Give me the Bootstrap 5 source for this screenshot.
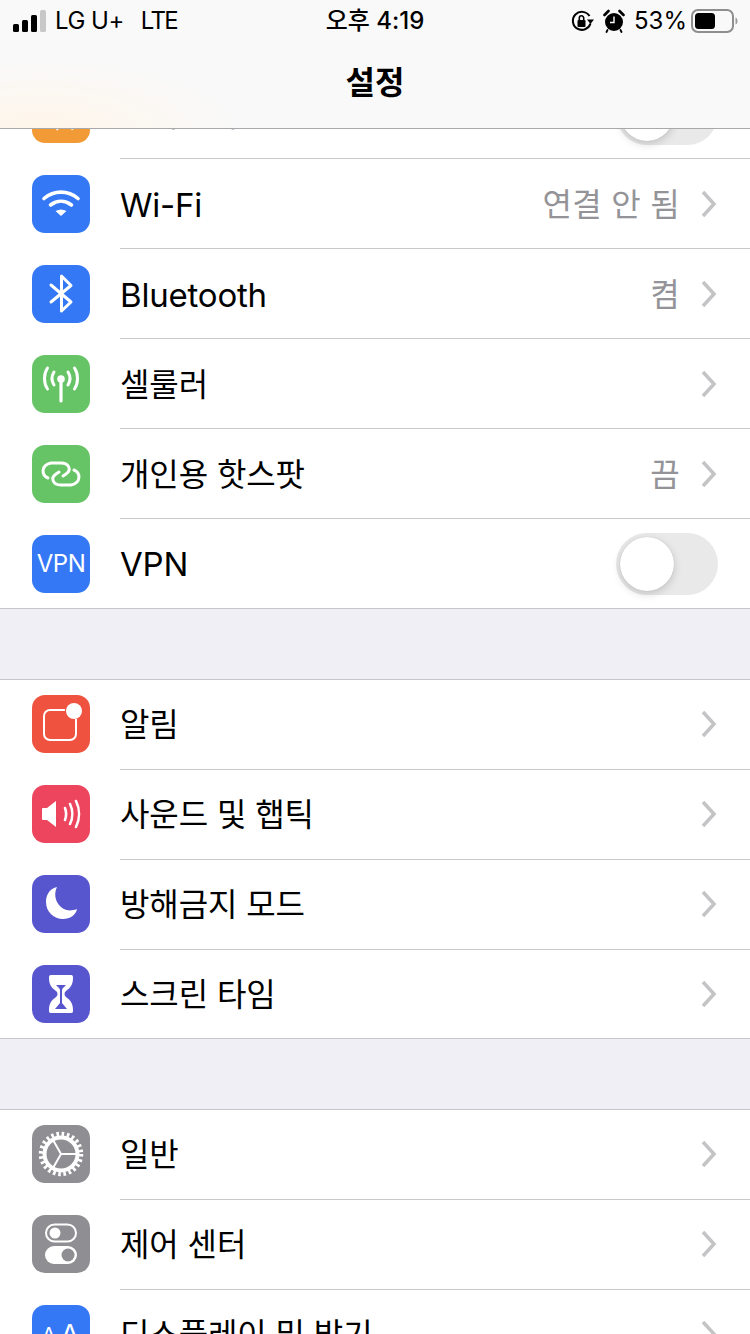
<!DOCTYPE html>
<html lang="ko">
<head>
  <meta charset="UTF-8" />
  <meta name="viewport" content="width=device-width, initial-scale=1.0"/>
  <title>설정</title>
  <link href="https://cdn.jsdelivr.net/npm/bootstrap@5.3.0/dist/css/bootstrap.min.css" rel="stylesheet"/>
  <style>
    html, body { height: 100%; }
    body {
      background: #f0eff5;
      font-family: Inter, "Noto Sans CJK KR", sans-serif;
      color: #000;
      overflow: hidden;
    }
    .phone { width: 750px; height: 1334px; overflow: hidden; position: relative; }

    .top-bar {
      position: absolute; top: 0; left: 0; right: 0; height: 129px; z-index: 5;
      background: radial-gradient(ellipse 200px 70px at 40px 130px, #fff6ea 0%, rgba(255,247,236,0) 100%), #f9f9f9;
      border-bottom: 1px solid #a9a9ab;
    }
    .status-line { height: 42px; padding: 0 12px 0 13px; font-size: 24px; line-height: 42px; position: relative; }
    .signal { width: 34px; height: 22px; margin-right: 8px; }
    .carrier { letter-spacing: -.5px; }
    .carrier-net { margin-left: 17px; letter-spacing: -1.6px; }
    .clock { position: absolute; left: 0; right: 0; top: 0; text-align: center; font-weight: 500; font-size: 24px; }
    .pct { margin: 0 4px 0 0; }
    .bar-title { font-size: 32px; font-weight: 600; line-height: 1; text-align: center; margin-top: 25px; }
    .stat-ico { margin-right: 9px; }

    .list-wrap { padding-top: 69px; }
    .set-group { background: #fff; border-bottom: 1px solid #c6c6c8; margin-bottom: 70px; }
    .set-group.has-top { border-top: 1px solid #c6c6c8; }
    .set-row { height: 90px; padding-left: 32px; position: relative; }
    .set-row:last-child { height: 89px; }
    .has-top .set-row { padding-bottom: 2px; }
    .has-top .set-row:last-child { height: 88px; padding-bottom: 0; }
    .set-row + .set-row::before {
      content: ""; position: absolute; left: 120px; right: 0; top: -1px; height: 1px; background: #c9c9cb;
    }
    .app-ico {
      width: 58px; height: 58px; border-radius: 13px; flex: none; margin-right: 30px;
      display: flex; align-items: center; justify-content: center; color: #fff;
    }
    .ico-orange { background: #f29b36; }
    .ico-blue { background: #3478f6; }
    .ico-green { background: #66c466; }
    .ico-red { background: #ef523f; }
    .ico-pink { background: #ec455d; }
    .ico-indigo { background: #5856ce; }
    .ico-gray { background: #8e8e93; }
    .row-label { font-size: 33px; line-height: 1; flex: 1; letter-spacing: -.2px; padding-top: 2px; }
    .row-label.ko-txt { font-size: 32px; letter-spacing: -.1px; }
    .row-val { font-size: 32px; line-height: 1; color: #949498; margin-right: 20px; letter-spacing: .3px; padding-top: 2px; }
    .chev { width: 18px; height: 28px; margin-right: 32px; flex: none; }
    .ios-switch {
      width: 102px; height: 62px; border-radius: 31px; background: #e9e9ea; margin-right: 32px;
      position: relative; flex: none;
    }
    .ios-switch::after {
      content: ""; position: absolute; left: 4px; top: 4px; width: 54px; height: 54px; border-radius: 50%;
      background: #fff; box-shadow: 0 3px 8px rgba(0,0,0,.16), 0 0 1px rgba(0,0,0,.2);
    }
    .vpn-txt { font-size: 24px; letter-spacing: -.5px; line-height: 1; }
    .aa-small { font-size: 26px; font-weight: 300; line-height: 36px; padding-top: 6px; }
    .aa-big { font-size: 36px; font-weight: 300; line-height: 36px; padding-top: 6px; }
  </style>
</head>
<body>
<div class="phone">

  <!-- status bar + title -->
  <div class="top-bar">
    <div class="status-line d-flex align-items-center">
      <svg class="signal" viewBox="0 0 34 22">
        <rect x="0" y="14" width="6" height="8" rx="1.5" fill="#000"/>
        <rect x="9" y="10" width="6" height="12" rx="1.5" fill="#000"/>
        <rect x="18" y="5" width="6" height="17" rx="1.5" fill="#000"/>
        <rect x="27" y="0" width="6" height="22" rx="1.5" fill="#c8c8c8"/>
      </svg>
      <span class="carrier">LG U+</span><span class="carrier-net">LTE</span>
      <div class="clock">오후 4:19</div>
      <div class="ms-auto d-flex align-items-center">
        <svg class="stat-ico" width="24" height="24" viewBox="0 0 24 24">
          <path d="M20.500 14.500A9 9 0 1 1 19.500 7" fill="none" stroke="#000" stroke-width="2"/>
          <path d="M17 10.500h7l-3.500 4.500z" fill="#000"/>
          <rect x="7.500" y="11" width="8" height="7" rx="1" fill="#000"/>
          <path d="M9.300 11V9a2.200 2.200 0 0 1 4.400 0v2" fill="none" stroke="#000" stroke-width="1.600"/>
        </svg>
        <svg class="stat-ico" width="22" height="24" viewBox="0 0 22 24">
          <circle cx="11" cy="13" r="9" fill="#000"/>
          <path d="M11 7.500v6H7" fill="none" stroke="#fff" stroke-width="1.400"/>
          <path d="M1.500 6 5.500 2M16.500 2l4 4" stroke="#000" stroke-width="2.600" stroke-linecap="round"/>
          <path d="M4.500 21 3.500 23M17.500 21l1 2" stroke="#000" stroke-width="1.800" stroke-linecap="round"/>
        </svg>
        <span class="pct">53%</span>
        <svg width="47" height="24" viewBox="0 0 47 24">
          <rect x="1" y="1" width="41" height="22" rx="6" fill="none" stroke="#8e8e8e" stroke-width="2"/>
          <rect x="4" y="4" width="20" height="16" rx="3.500" fill="#000"/>
          <path d="M44.500 8.500c1.500.5 2 2 2 3.500s-.5 3-2 3.500z" fill="#9a9a9a"/>
        </svg>
      </div>
    </div>
    <div class="bar-title">설정</div>
  </div>

  <div class="list-wrap">

    <div class="set-group">
      <div class="set-row d-flex align-items-center">
        <div class="app-ico ico-orange">
          <svg width="58" height="58" viewBox="0 0 58 58">
            <path d="M43 11c2 0 4 2 4 4 0 2-1 3.500-3 5.500l-5 5 4 17-3 3-7.500-14-6 6 .8 6-2.300 2.300-3.500-6.500-6.500-3.500 2.300-2.300 6 .8 6-6-14-7.500 3-3 17 4 5-5c2-2 3.500-3 5.200-3z" fill="#fff"/>
          </svg>
        </div>
        <div class="row-label ko-txt">에어플레인 모드</div>
        <div class="ios-switch"></div>
      </div>
      <div class="set-row d-flex align-items-center">
        <div class="app-ico ico-blue">
          <svg width="40" height="40" viewBox="0 0 40 40" fill="none" stroke="#fff" stroke-width="3.600" stroke-linecap="round">
            <path d="M3 14.500c10-8.500 24-8.500 34 0"/>
            <path d="M9.500 21c6.500-5 14.500-5 21 0"/>
            <path d="M20 32l-5.500-5c3.500-2 7.500-2 11 0z" fill="#fff" stroke="none"/>
          </svg>
        </div>
        <div class="row-label">Wi-Fi</div>
        <div class="row-val">연결 안 됨</div>
        <svg class="chev" viewBox="0 0 18 28"><path d="M3 2l11 12L3 26" fill="none" stroke="#c4c4c7" stroke-width="3.500"/></svg>
      </div>
      <div class="set-row d-flex align-items-center">
        <div class="app-ico ico-blue">
          <svg width="40" height="44" viewBox="0 0 40 44" fill="none" stroke="#fff" stroke-width="3" stroke-linecap="round" stroke-linejoin="round">
            <path d="M10 13l20 17-9.500 9V4l9.500 9.500L10 30"/>
          </svg>
        </div>
        <div class="row-label">Bluetooth</div>
        <div class="row-val">켬</div>
        <svg class="chev" viewBox="0 0 18 28"><path d="M3 2l11 12L3 26" fill="none" stroke="#c4c4c7" stroke-width="3.500"/></svg>
      </div>
      <div class="set-row d-flex align-items-center">
        <div class="app-ico ico-green">
          <svg width="40" height="48" viewBox="0 0 40 48" fill="none" stroke="#fff" stroke-width="3" stroke-linecap="round">
            <circle cx="20" cy="19" r="3.800" fill="#fff" stroke="none"/>
            <path d="M20 21v20" stroke-width="3.200"/>
            <path d="M13 12c-2.500 4-2.500 9 0 13M27 12c2.500 4 2.500 9 0 13"/>
            <path d="M6.500 8c-4 6-4 15 0 21M33.500 8c4 6 4 15 0 21"/>
          </svg>
        </div>
        <div class="row-label ko-txt">셀룰러</div>
        <svg class="chev" viewBox="0 0 18 28"><path d="M3 2l11 12L3 26" fill="none" stroke="#c4c4c7" stroke-width="3.500"/></svg>
      </div>
      <div class="set-row d-flex align-items-center">
        <div class="app-ico ico-green">
          <svg width="58" height="58" viewBox="0 0 58 58" fill="none" stroke="#fff" stroke-width="3" stroke-linecap="round">
            <path d="M16 33c-7-3-7-13 3-15h10c8 0 11 7 5 11l-3 2"/>
            <path d="M42 25c7 3 7 13-3 15H29c-8 0-11-7-5-11l3-2"/>
          </svg>
        </div>
        <div class="row-label ko-txt">개인용 핫스팟</div>
        <div class="row-val">끔</div>
        <svg class="chev" viewBox="0 0 18 28"><path d="M3 2l11 12L3 26" fill="none" stroke="#c4c4c7" stroke-width="3.500"/></svg>
      </div>
      <div class="set-row d-flex align-items-center">
        <div class="app-ico ico-blue"><span class="vpn-txt">VPN</span></div>
        <div class="row-label">VPN</div>
        <div class="ios-switch"></div>
      </div>
    </div>

    <div class="set-group has-top">
      <div class="set-row d-flex align-items-center">
        <div class="app-ico ico-red">
          <svg width="58" height="58" viewBox="0 0 58 58" fill="none">
            <path d="M33 15H18a6 6 0 0 0-6 6v18a6 6 0 0 0 6 6h20a6 6 0 0 0 6-6V24" stroke="#fff" stroke-width="2"/>
            <circle cx="42" cy="16" r="8" fill="#fff"/>
          </svg>
        </div>
        <div class="row-label ko-txt">알림</div>
        <svg class="chev" viewBox="0 0 18 28"><path d="M3 2l11 12L3 26" fill="none" stroke="#c4c4c7" stroke-width="3.500"/></svg>
      </div>
      <div class="set-row d-flex align-items-center">
        <div class="app-ico ico-pink">
          <svg width="58" height="58" viewBox="0 0 58 58" fill="none" stroke="#fff" stroke-width="2.600" stroke-linecap="round">
            <path d="M11 23h4l9-7v26l-9-7h-4a1 1 0 0 1-1-1V24a1 1 0 0 1 1-1z" fill="#fff" stroke="none"/>
            <path d="M33 23c1.500 4 1.500 8 0 12"/>
            <path d="M38 19c3 6 3 14 0 20"/>
            <path d="M44 16c4 8 4 18 0 26"/>
          </svg>
        </div>
        <div class="row-label ko-txt">사운드 및 햅틱</div>
        <svg class="chev" viewBox="0 0 18 28"><path d="M3 2l11 12L3 26" fill="none" stroke="#c4c4c7" stroke-width="3.500"/></svg>
      </div>
      <div class="set-row d-flex align-items-center">
        <div class="app-ico ico-indigo">
          <svg width="58" height="58" viewBox="0 0 58 58">
            <path d="M25 12c-9 2-11 10-11 15 0 10 8 17 17 17 7 0 13-4 14-10-8 3-14 1-18-4-4-5-5-12-2-18z" fill="#fff"/>
          </svg>
        </div>
        <div class="row-label ko-txt">방해금지 모드</div>
        <svg class="chev" viewBox="0 0 18 28"><path d="M3 2l11 12L3 26" fill="none" stroke="#c4c4c7" stroke-width="3.500"/></svg>
      </div>
      <div class="set-row d-flex align-items-center">
        <div class="app-ico ico-indigo">
          <svg width="58" height="58" viewBox="0 0 58 58">
            <path d="M19 10h20c2 0 2 1.500 2 3 0 7-3 10-7 13-2 1.500-2 4.500 0 6 4 3 7 6 7 13 0 2 0 3-2 3H19c-2 0-2-1-2-3 0-7 3-10 7-13 2-1.500 2-4.500 0-6-4-3-7-6-7-13 0-1.500 0-3 2-3z" fill="#fff"/>
            <path d="M24 20h10l-3 3c-.6.6-1 1.500-1 2.500V38l5 6H23l5-6V25.500c0-1-.4-1.900-1-2.500z" fill="#5856ce"/>
          </svg>
        </div>
        <div class="row-label ko-txt">스크린 타임</div>
        <svg class="chev" viewBox="0 0 18 28"><path d="M3 2l11 12L3 26" fill="none" stroke="#c4c4c7" stroke-width="3.500"/></svg>
      </div>
    </div>

    <div class="set-group has-top">
      <div class="set-row d-flex align-items-center">
        <div class="app-ico ico-gray">
          <svg width="58" height="58" viewBox="0 0 58 58" fill="none" stroke="#fff">
            <circle cx="29" cy="29" r="16.500" stroke-width="4"/>
            <circle cx="29" cy="29" r="20" stroke-width="4.500" stroke-dasharray="2.600 2.636"/>
            <path d="M29 29L21 15M29 29l-8 14M29 29h16" stroke-width="2"/>
          </svg>
        </div>
        <div class="row-label ko-txt">일반</div>
        <svg class="chev" viewBox="0 0 18 28"><path d="M3 2l11 12L3 26" fill="none" stroke="#c4c4c7" stroke-width="3.500"/></svg>
      </div>
      <div class="set-row d-flex align-items-center">
        <div class="app-ico ico-gray">
          <svg width="58" height="58" viewBox="0 0 58 58">
            <rect x="14" y="9.500" width="30" height="17" rx="8.500" fill="none" stroke="#fff" stroke-width="2"/>
            <circle cx="23" cy="18" r="5.500" fill="#fff"/>
            <rect x="13" y="31" width="32" height="18" rx="9" fill="#fff"/>
            <circle cx="36" cy="40" r="6.500" fill="#8e8e93"/>
          </svg>
        </div>
        <div class="row-label ko-txt">제어 센터</div>
        <svg class="chev" viewBox="0 0 18 28"><path d="M3 2l11 12L3 26" fill="none" stroke="#c4c4c7" stroke-width="3.500"/></svg>
      </div>
      <div class="set-row d-flex align-items-center">
        <div class="app-ico ico-blue"><span class="aa-small">A</span><span class="aa-big">A</span></div>
        <div class="row-label ko-txt">디스플레이 및 밝기</div>
        <svg class="chev" viewBox="0 0 18 28"><path d="M3 2l11 12L3 26" fill="none" stroke="#c4c4c7" stroke-width="3.500"/></svg>
      </div>
    </div>

  </div>
</div>
<script src="https://cdn.jsdelivr.net/npm/bootstrap@5.3.0/dist/js/bootstrap.bundle.min.js"></script>
</body>
</html>
